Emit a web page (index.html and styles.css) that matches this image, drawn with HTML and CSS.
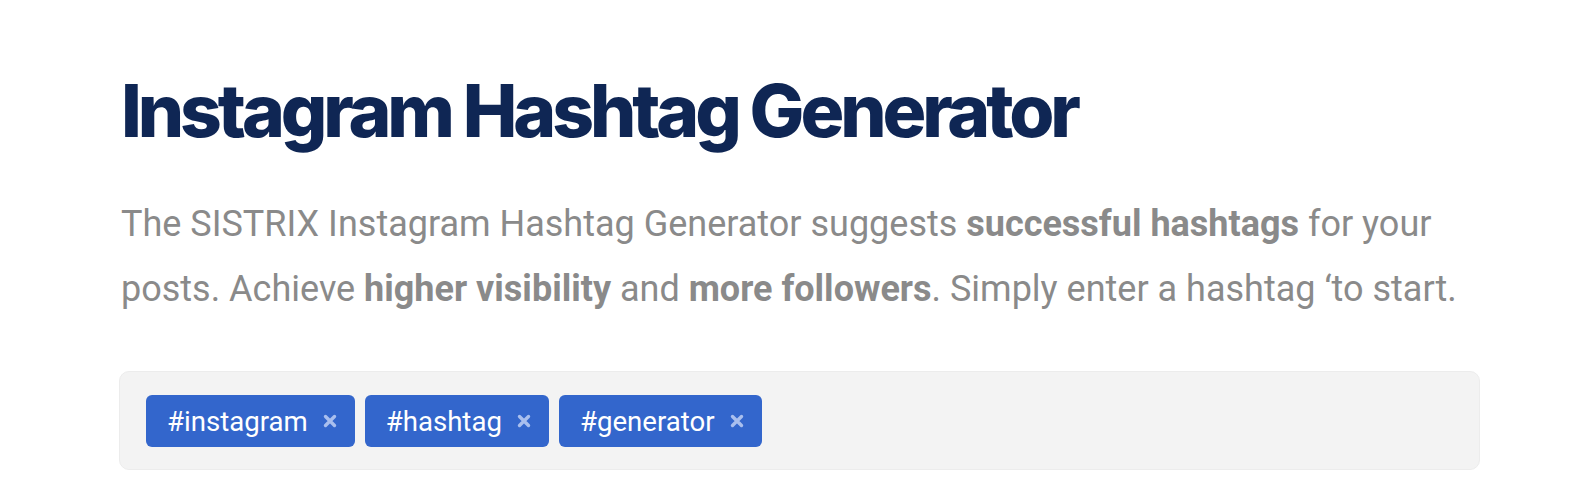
FILE: index.html
```html
<!DOCTYPE html>
<html lang="en">
<head>
<meta charset="utf-8">
<title>Instagram Hashtag Generator</title>
<link rel="stylesheet" href="styles.css">
</head>
<body>
<main class="page">
  <h1 class="title">Instagram Hashtag Generator</h1>
  <p class="intro">The SISTRIX Instagram Hashtag Generator suggests <strong>successful hashtags</strong> for your posts. Achieve <strong>higher visibility</strong> and <strong>more followers</strong>. Simply enter a hashtag ‘to start.</p>
  <div class="tag-input">
    <span class="tag"><span class="tag-label">#instagram</span><svg class="tag-x" viewBox="0 0 14 14" aria-hidden="true"><path d="M2.5 2.5 L11.5 11.5 M11.5 2.5 L2.5 11.5"/></svg></span>
    <span class="tag"><span class="tag-label">#hashtag</span><svg class="tag-x" viewBox="0 0 14 14" aria-hidden="true"><path d="M2.5 2.5 L11.5 11.5 M11.5 2.5 L2.5 11.5"/></svg></span>
    <span class="tag"><span class="tag-label">#generator</span><svg class="tag-x" viewBox="0 0 14 14" aria-hidden="true"><path d="M2.5 2.5 L11.5 11.5 M11.5 2.5 L2.5 11.5"/></svg></span>
  </div>
</main>
</body>
</html>
```
FILE: styles.css
```css
html, body {
  margin: 0;
  padding: 0;
  background: #ffffff;
}

.page {
  padding: 74px 0 0 121px;
  width: 1359px;
}

.title {
  margin: 0;
  font-family: "Inter", "Liberation Sans", sans-serif;
  font-weight: 800;
  font-size: 73px;
  line-height: 1;
  letter-spacing: -4.1px;
  color: #0f2654;
}

.intro {
  margin: 45px 0 0;
  font-family: "Roboto", "Liberation Sans", sans-serif;
  font-size: 36px;
  line-height: 65px;
  color: #8a8a8a;
  max-width: 1340px;
}

.intro strong {
  font-weight: 700;
}

.tag-input {
  margin: 49px 0 0 -2px;
  box-sizing: border-box;
  height: 99px;
  width: 1361px;
  padding: 23px 26px;
  display: flex;
  gap: 10px;
  align-items: flex-start;
  background: #f3f3f3;
  border: 1px solid #ececec;
  border-radius: 10px;
}

.tag {
  display: inline-flex;
  align-items: center;
  box-sizing: border-box;
  height: 52px;
  padding: 0 18px 0 21px;
  background: #3366cc;
  color: #ffffff;
  border-radius: 6px;
  font-family: "Roboto", "Liberation Sans", sans-serif;
  font-size: 27.6px;
  white-space: nowrap;
}

.tag-x {
  width: 14px;
  height: 14px;
  margin-left: 15px;
  fill: none;
  stroke: #a9bfee;
  stroke-width: 3.4;
  stroke-linecap: round;
}
```
